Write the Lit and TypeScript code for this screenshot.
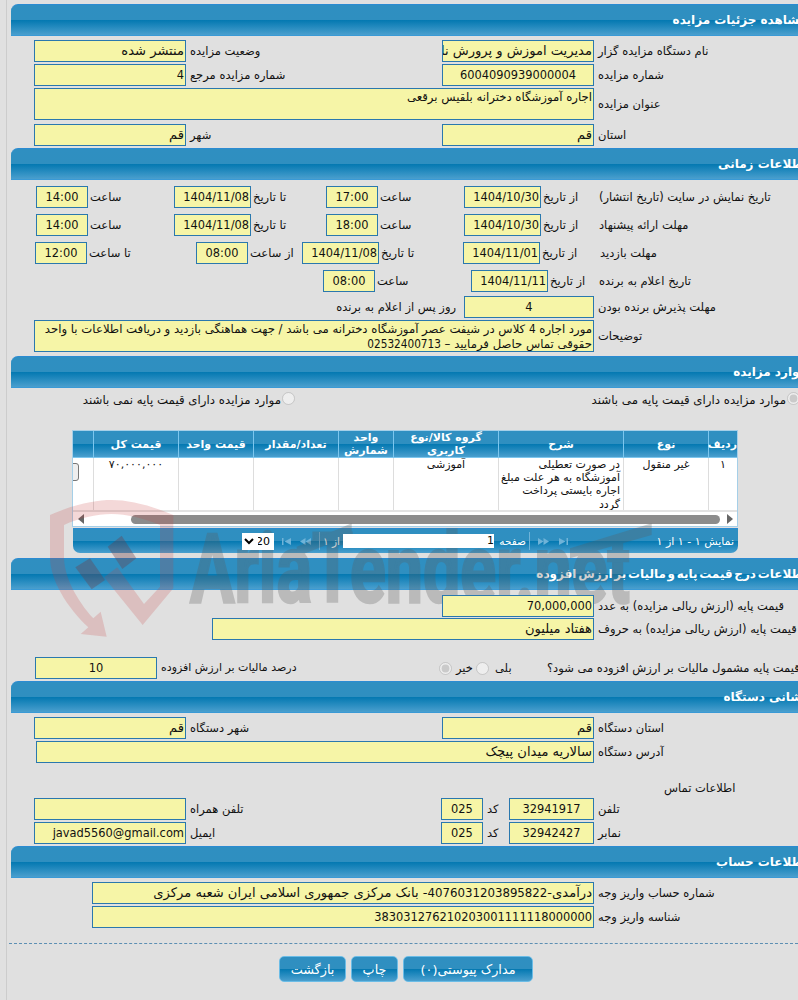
import { LitElement, html, css } from "lit";
import { customElement } from "lit/decorators.js";

const f = (t: unknown, cls = "") => html`<div class="fld ${cls}">${t}</div>`;
const l = (t: string, cls = "") => html`<div class="lbl ${cls}">${t}</div>`;

@customElement("app-root")
export class AppRoot extends LitElement {
  static styles = css`
    :host { display:block; position:relative; width:798px; height:1000px; overflow:hidden; background:#e0e0e0;
      font:11.5px "DejaVu Sans", sans-serif; color:#111; }
    .frame { margin-left:6px; border-left:1px solid #ccc; padding:4px 0 0 4px; width:830px; height:996px; }
    .bar { height:32px; box-sizing:border-box; width:801px; border-radius:7px 0 0 0; padding-right:5px; direction:rtl;
      display:flex; align-items:center; color:#fff; font-weight:700; font-size:12px; white-space:nowrap;
      border-top:1px solid #2b8bd2; border-bottom:1px solid #3a9ad6;
      background:linear-gradient(#2f8fc1 0,#2f8fc0 50%,#0378b1 50%,#4a9fce 100%); }
    .tight { word-spacing:-2.5px; }
    .row { display:grid; height:20px; white-space:nowrap; }
    .fld { position:relative; z-index:2; box-sizing:border-box; border:1px solid #2a78ae; background:#f6f5a7; overflow:hidden;
      direction:rtl; text-align:right; padding:0 1px; font:12.7px/19px "DejaVu Sans Condensed","DejaVu Sans",sans-serif; color:#111; white-space:nowrap; }
    .p { font:13.1px/20px "DejaVu Sans",sans-serif; }
    .ta { font:11.7px/15px "DejaVu Sans",sans-serif; padding-top:1px; }
    .d { font-family:"DejaVu Sans Condensed","DejaVu Sans",sans-serif; }
    .c { text-align:center; }
    .lbl { line-height:22px; padding-left:4px; direction:rtl; text-align:left; white-space:nowrap; overflow:visible; }
    .end { text-align:right; padding:0 8px 0 0; }
    .two { display:grid; grid-template-columns:152px 256px 152px 1fr; padding-left:23px; }
    .wide { display:grid; grid-template-columns:560px 1fr; padding-left:23px; }
    .tall { height:30px; }
    .tall .lbl { line-height:32px; }
    .tall .fld { white-space:normal; }
    .mt4 { margin-top:4px; } .mt5 { margin-top:5px; } .mt6 { margin-top:6px; } .mt8 { margin-top:8px; } .mt3 { margin-top:3px; } .mt19 { margin-top:19px; }
    .t1 .lbl, .t3 .lbl, .t4 .lbl { padding-left:2px; }
    .t1 { grid-template-columns:52px 86px 77px 75px 52px 86px 77px 56px 1fr; padding-left:25px; }
    .t3 { grid-template-columns:52px 109px 52px 54px 77px 84px 77px 58px 1fr; padding-left:24px; }
    .t4 { grid-template-columns:52px 96px 77px 49px 1fr; padding-left:312px; }
    .t5 { grid-template-columns:453px 130px 1fr; }
    .g1 { grid-template-columns:152px 1fr; padding-left:431px; }
    .g2 { grid-template-columns:382px 1fr; padding-left:201px; }
    .g3 { grid-template-columns:122px 282px 13px 24px 13px 54px 1fr; padding-left:24px; }
    .g3 input { align-self:center; }
    .tax { font-size:11px; }
    .by { padding-left:6px; }
    .a2 { grid-template-columns:558px 1fr; padding-left:25px; }
    .contact { height:14px; line-height:14px; direction:rtl; margin-left:653px; text-align:left; margin-top:20px; width:72px; white-space:nowrap; }
    .c1 { grid-template-columns:152px 255px 42px 26px 85px 1fr; padding-left:23px; }
    .k { grid-template-columns:502px 1fr; padding-left:81px; }
    input[type=radio] { margin:0; width:13px; height:13px; }
    .radios { display:grid; grid-template-columns:284px 505px; height:14px; margin-top:4px; white-space:nowrap; }
    .pair { display:flex; justify-content:flex-end; gap:1px; line-height:16px; direction:ltr; font-size:11.8px; }
    .pair span { direction:rtl; }
    .grid { box-sizing:border-box; width:666px; height:97px; margin:24px 0 0 61px; border:1px solid #a5cfe8; background:#fff; position:relative; }
    .clip { overflow:hidden; direction:rtl; height:79px; }
    table { border-collapse:separate; border-spacing:0; table-layout:fixed; width:724px; direction:rtl; }
    th { height:26px; box-sizing:border-box; padding:0; color:#fff; font-size:11px; line-height:13px; font-weight:700;
      border-left:1px solid #7cc6ee; border-bottom:1px solid #7cc6ee;
      background:linear-gradient(#2f8fc1 0,#2f8fc0 50%,#0378b1 50%,#4a9fce 100%); }
    td { height:52px; box-sizing:border-box; vertical-align:top; text-align:center; padding:0 2px; line-height:13.2px;
      border-left:1px solid #ddd; overflow:hidden; font-size:11px; }
    .w29 { width:29px; } .w85 { width:85px; } .w125 { width:125px; } .w105 { width:105px; } .w55 { width:55px; } .w75 { width:75px; } .w80 { width:80px; }
    td.desc { text-align:right; padding-right:3px; }
    td.act { padding:5px 14px 0 0; text-align:right; }
    .act button { width:50px; height:18px; padding:0; box-sizing:border-box; font:11px "DejaVu Sans", sans-serif; background:#eee; border:1px solid #777; border-radius:3px; color:#111; }
    .hs { box-sizing:border-box; border-top:2px solid #e2e2e2; display:flex; align-items:center; height:16px; padding-left:5px; direction:ltr; }
    .thumb { height:9px; width:589px; margin-left:47px; border-radius:5px; background:#8c8c8c; flex:none; }
    .hs .ar2 { margin-left:7px; }
    .pager { box-sizing:border-box; width:665px; height:25px; margin-left:62px; margin-top:1px; padding-left:169px; border-radius:0 0 7px 7px;
      display:flex; align-items:center; color:#fff; direction:ltr; white-space:nowrap; font-size:11px;
      border-top:1px solid #2b8bd2;
      background:linear-gradient(#2f8fc1 0,#2f8fc0 50%,#0378b1 50%,#4a9fce 100%); }
    .pager select { position:relative; z-index:2; width:32px; height:17px; border:0; padding:0; background:#fff; font:11px "DejaVu Sans", sans-serif; }
    .pager svg { flex:none; }
    .sp { width:1px; height:18px; background:#6fb3d8; flex:none; }
    .m3 { margin-left:3px; } .m6 { margin-left:6px; } .m8 { margin-left:8px; } .m9 { margin-left:9px; } .m10 { margin-left:10px; }
    .ax { width:14px; flex:none; direction:rtl; font-size:10.5px; }
    .sf { width:29px; flex:none; direction:rtl; font-size:10.5px; }
    .pi { position:relative; z-index:2; width:151px; height:14px; background:#fff; color:#111; direction:rtl; text-align:right; line-height:14px; flex:none; }
    .ptxt { flex:1; text-align:right; direction:rtl; padding-right:4px; }
    .dash { margin-top:17px; border-top:1px dashed #5c8fb3; width:789px; margin-left:-2px; height:0; }
    .btns { display:flex; margin:12px 0 0 268px; gap:5px; }
    .btn { box-sizing:border-box; height:26px; border:1px solid #6bbce6; border-radius:5px; color:#fff; font-size:12.8px; direction:rtl;
      display:flex; align-items:center; justify-content:center;
      background:linear-gradient(#2f8fc1 0,#2f8fc0 50%,#0378b1 50%,#4a9fce 100%); }
    .b1 { width:67px; } .b2 { width:47px; } .b3 { width:130px; }
    .wm { position:absolute; left:40px; top:490px; z-index:1; pointer-events:none; }
    .wm text { font-family:Roboto, "Liberation Sans", sans-serif; font-weight:700; font-size:288px; stroke:#5a5a5a; stroke-width:8px; }
  `;

  render() {
    return html`<div class="frame">
      <div class="bar">مشاهده جزئیات مزایده</div>
      <div class="row two mt4">${f("منتشر شده", "p")}${l("وضعیت مزایده")}${f("مدیریت اموزش و پرورش ناحیه", "p")}${l("نام دستگاه مزایده گزار")}</div>
      <div class="row two mt4">${f("4")}${l("شماره مزایده مرجع")}${f("6004090939000004", "c")}${l("شماره مزایده")}</div>
      <div class="row wide tall mt4">${f("اجاره آموزشگاه دخترانه بلقیس برقعی", "ta")}${l("عنوان مزایده")}</div>
      <div class="row two mt6">${f("قم", "p")}${l("شهر")}${f("قم", "p")}${l("استان")}</div>

      <div class="bar mt4">اطلاعات زمانی</div>
      <div class="row t1 mt6">${f("14:00", "c")}${l("ساعت")}${f("1404/11/08")}${l("تا تاریخ")}${f("17:00", "c")}${l("ساعت")}${f("1404/10/30")}${l("از تاریخ")}${l("تاریخ نمایش در سایت (تاریخ انتشار)")}</div>
      <div class="row t1 mt8">${f("14:00", "c")}${l("ساعت")}${f("1404/11/08")}${l("تا تاریخ")}${f("18:00", "c")}${l("ساعت")}${f("1404/10/30")}${l("از تاریخ")}${l("مهلت ارائه پیشنهاد")}</div>
      <div class="row t3 mt8">${f("12:00", "c")}${l("تا ساعت")}${f("08:00", "c")}${l("از ساعت")}${f("1404/11/08")}${l("تا تاریخ")}${f("1404/11/01")}${l("از تاریخ")}${l("مهلت بازدید")}</div>
      <div class="row t4 mt8">${f("08:00", "c")}${l("ساعت")}${f("1404/11/11")}${l("از تاریخ")}${l("تاریخ اعلام به برنده")}</div>
      <div class="row t5 mt6">${l("روز پس از اعلام به برنده", "end")}${f("4", "c")}${l("مهلت پذیرش برنده بودن")}</div>
      <div class="row wide tall mt4">${f(html`مورد اجاره <span class="d">4</span> کلاس در شیفت عصر آموزشگاه دخترانه می باشد / جهت هماهنگی بازدید و دریافت اطلاعات با واحد حقوقی تماس حاصل فرمایید – <span class="d">02532400713</span>`, "ta")}${l("توضیحات")}</div>

      <div class="bar mt6">موارد مزایده</div>
      <div class="radios">
        <div class="pair"><span>موارد مزایده دارای قیمت پایه نمی باشند</span><input type="radio" disabled /></div>
        <div class="pair"><span>موارد مزایده دارای قیمت پایه می باشند</span><input type="radio" disabled checked /></div>
      </div>
      <div class="grid">
        <div class="clip"><table>
          <thead><tr>
            <th class="w29">ردیف</th><th class="w85">نوع</th><th class="w125">شرح</th><th class="w105">گروه کالا/نوع کاربری</th>
            <th class="w55">واحد شمارش</th><th class="w85">تعداد/مقدار</th><th class="w75">قیمت واحد</th><th class="w85">قیمت کل</th><th class="w80">مدارک</th>
          </tr></thead>
          <tbody><tr>
            <td>۱</td><td>غیر منقول</td>
            <td class="desc">در صورت تعطیلی آموزشگاه به هر علت مبلغ اجاره بایستی پرداخت گردد</td>
            <td>آموزشی</td><td></td><td></td><td></td><td>۷۰,۰۰۰,۰۰۰</td>
            <td class="act"><button>جزئیات</button></td>
          </tr></tbody>
        </table></div>
        <div class="hs">
          <svg width="6" height="10" viewBox="0 0 6 10"><path d="M6 0V10L0 5Z" fill="#666"/></svg>
          <div class="thumb"></div>
          <svg class="ar2" width="6" height="10" viewBox="0 0 6 10"><path d="M0 0V10L6 5Z" fill="#666"/></svg>
        </div>
      </div>
      <div class="pager">
        <select dir="rtl"><option>20</option></select>
        <svg class="m8" width="9" height="7" viewBox="0 0 9 7"><path d="M0 0h1.5v7H0zM9 0v7L2.5 3.5z" fill="#6fb3d8"/></svg>
        <svg class="m9" width="11" height="7" viewBox="0 0 11 7"><path d="M5.5 0v7L0 3.5zM11 0v7L5.5 3.5z" fill="#6fb3d8"/></svg>
        <div class="sp m8"></div>
        <span class="ax m6">از ۱</span>
        <div class="pi m3">1</div>
        <span class="sf m3">صفحه</span>
        <div class="sp m3"></div>
        <svg class="m8" width="11" height="7" viewBox="0 0 11 7"><path d="M0 0v7L5.5 3.5zM5.5 0v7L11 3.5z" fill="#6fb3d8"/></svg>
        <svg class="m10" width="9" height="7" viewBox="0 0 9 7"><path d="M0 0v7l6.5-3.5zM7.5 0H9v7H7.5z" fill="#6fb3d8"/></svg>
        <span class="ptxt">نمایش ۱ - ۱ از ۱</span>
      </div>

      <div class="bar tight mt5">اطلاعات درج قیمت پایه و مالیات بر ارزش افزوده</div>
      <div class="row g1 mt5">${f("70,000,000")}${l("قیمت پایه (ارزش ریالی مزایده) به عدد")}</div>
      <div class="row g2 mt3">${f("هفتاد میلیون", "p")}${l("قیمت پایه (ارزش ریالی مزایده) به حروف")}</div>
      <div class="row g3 mt19">${f("10", "c")}${l("درصد مالیات بر ارزش افزوده", "tax")}
        <input type="radio" disabled checked />${l("خیر")}<input type="radio" disabled />${l("بلی", "by")}${l("قیمت پایه مشمول مالیات بر ارزش افزوده می شود؟")}</div>

      <div class="bar mt4">نشانی دستگاه</div>
      <div class="row two mt4">${f("قم", "p")}${l("شهر دستگاه")}${f("قم", "p")}${l("استان دستگاه")}</div>
      <div class="row a2 mt4">${f("سالاریه میدان پیچک", "p")}${l("آدرس دستگاه")}</div>
      <div class="contact">اطلاعات تماس</div>
      <div class="row c1 mt3">${f("")}${l("تلفن همراه")}${f("025", "c")}${l("کد")}${f("32941917", "c")}${l("تلفن")}</div>
      <div class="row c1 mt4">${f("javad5560@gmail.com")}${l("ایمیل")}${f("025", "c")}${l("کد")}${f("32942427", "c")}${l("نمابر")}</div>

      <div class="bar mt4">اطلاعات حساب</div>
      <div class="row k mt4">${f(html`درآمدی-<span class="d">4076031203895822</span>- بانک مرکزی جمهوری اسلامی ایران شعبه مرکزی`, "p")}${l("شماره حساب واریز وجه")}</div>
      <div class="row k mt4">${f("383031276210203001111118000000")}${l("شناسه واریز وجه")}</div>
      <div class="dash"></div>
      <div class="btns">
        <div class="btn b1">بازگشت</div><div class="btn b2">چاپ</div><div class="btn b3">مدارک پیوستی(۰)</div>
      </div>
    </div>
    <svg class="wm" width="660" height="160" viewBox="0 0 1980 480">
      <path fill="#c83c3c" opacity=".2" d="M30 75C110 40 170 30 215 30C265 30 330 45 400 75V295L308 405L192 262L232 232L312 342L360 290V105C310 85 260 72 215 72C170 72 115 85 72 105V200C72 260 110 330 160 385L182 365L200 440L122 432L145 412C80 350 30 270 30 200Z"/>
      <g fill="#6e3c46" opacity=".35">
        <path d="M245 137L289 205L247 237L203 170Z"/>
        <path d="M150 205L195 270L155 298L106 232Z"/>
      </g>
      <g fill="#5a5a5a" opacity=".28">
        <text x="450" y="335" textLength="1320" lengthAdjust="spacingAndGlyphs">AriaTender.net</text>
        <path d="M770 170L935 100V135L770 200Z"/>
        <path d="M1590 175L1835 100V135L1590 205Z"/>
      </g>
    </svg>`;
  }
}
